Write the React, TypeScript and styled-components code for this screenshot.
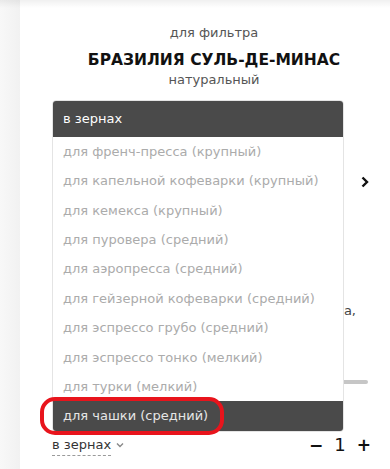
import React from "react";
import styled, { createGlobalStyle } from "styled-components";

const GlobalStyle = createGlobalStyle`
  * { box-sizing: border-box; }
  html, body { margin: 0; padding: 0; }
  body {
    font-family: "DejaVu Sans", "Noto Sans", sans-serif;
    background: #f6f6f6;
    color: #333;
  }
`;

const Page = styled.div`
  position: relative;
  display: flex;
  min-height: 469px;
  overflow: hidden;
`;

const TopShadow = styled.div`
  position: absolute;
  top: 0;
  left: 0;
  right: 0;
  height: 8px;
  background: linear-gradient(rgba(0, 0, 0, 0.06), rgba(0, 0, 0, 0));
  pointer-events: none;
  z-index: 5;
`;

const Strip = styled.div`
  width: 20px;
  flex-shrink: 0;
  background: linear-gradient(90deg, #f8f8f8, #f1f1f1);
`;

const Card = styled.div`
  flex: 1;
  min-width: 0;
  background: #fff;
  padding: 24px 14px 0 32px;
`;

const Subtitle = styled.div`
  text-align: center;
  font-size: 13px;
  line-height: 18px;
  color: #555;
`;

const Title = styled.h2`
  margin: 7px 0 0;
  text-align: center;
  font-size: 15.5px;
  line-height: 22px;
  font-weight: 700;
  color: #111;
  white-space: nowrap;
`;

const Body = styled.div`
  display: flex;
  flex-direction: column;
`;

const SliderRow = styled.div`
  height: 186px;
  display: flex;
  justify-content: flex-end;
  padding: 87px 7px 0 0;
`;

const Description = styled.p`
  margin: 26px 0 0;
  padding-right: 20px;
  font-size: 13px;
  line-height: 20px;
  color: #444;
  text-align: right;
  white-space: nowrap;
  overflow: hidden;
`;

const Track = styled.div`
  margin: 59px 8px 0 0;
  height: 4px;
  border-radius: 2px;
  background: #c6c6c6;
`;

const BottomRow = styled.div`
  margin-top: 50px;
  display: flex;
  justify-content: space-between;
  align-items: center;
  padding-right: 5px;
`;

const SelectWrap = styled.div`
  position: relative;
  display: flex;
  align-items: center;
  gap: 5px;
`;

const SelectValue = styled.span`
  font-size: 13px;
  line-height: 20px;
  color: #333;
  border-bottom: 1px dashed #9a9a9a;
`;

const Dropdown = styled.ul`
  position: absolute;
  left: 0;
  bottom: calc(100% + 3px);
  width: 292px;
  margin: 0;
  padding: 0;
  list-style: none;
  background: #fff;
  border: 1px solid #e4e4e4;
  border-radius: 4px;
  z-index: 3;
`;

const DropHead = styled.li`
  height: 36px;
  display: flex;
  align-items: center;
  padding-left: 10px;
  background: #4a4a4a;
  color: #fff;
  font-size: 13px;
  border-radius: 3px 3px 0 0;
`;

const Option = styled.li<{ $active?: boolean }>`
  position: relative;
  height: 29.4px;
  display: flex;
  align-items: center;
  padding-left: 10px;
  font-size: 13px;
  color: ${(p) => (p.$active ? "#e6e6e6" : "#ababab")};
  background: ${(p) => (p.$active ? "#4a4a4a" : "transparent")};
  border-radius: ${(p) => (p.$active ? "0 0 3px 3px" : "0")};
`;

const Highlight = styled.span`
  position: absolute;
  left: -13px;
  top: -4px;
  bottom: -4px;
  width: 184px;
  border: 4px solid #e8141c;
  border-radius: 15px;
  pointer-events: none;
`;

const Qty = styled.div`
  display: flex;
  align-items: center;
  gap: 11px;
  font-size: 18px;
  line-height: 22px;
  color: #111;
`;

const QtyButton = styled.button`
  border: 0;
  background: none;
  padding: 0;
  font: inherit;
  font-size: 17px;
  font-weight: 700;
  color: #111;
  cursor: pointer;
`;

const options = [
  "для френч-пресса (крупный)",
  "для капельной кофеварки (крупный)",
  "для кемекса (крупный)",
  "для пуровера (средний)",
  "для аэропресса (средний)",
  "для гейзерной кофеварки (средний)",
  "для эспрессо грубо (средний)",
  "для эспрессо тонко (мелкий)",
  "для турки (мелкий)",
];

export default function App() {
  return (
    <>
      <GlobalStyle />
      <Page>
        <TopShadow />
        <Strip />
        <Card>
          <Subtitle>для фильтра</Subtitle>
          <Title>БРАЗИЛИЯ СУЛЬ-ДЕ-МИНАС</Title>
          <Subtitle>натуральный</Subtitle>
          <Body>
            <SliderRow>
              <svg width="8" height="12" viewBox="0 0 8 12">
                <path d="M1.5 1.5 L6 6 L1.5 10.5" fill="none" stroke="#111" strokeWidth="2.4" />
              </svg>
            </SliderRow>
            <Description>шоколад, карамель, слива,</Description>
            <Track />
            <BottomRow>
              <SelectWrap>
                <SelectValue>в зернах</SelectValue>
                <svg width="8" height="6" viewBox="0 0 8 6">
                  <path d="M1 1.5 L4 4.5 L7 1.5" fill="none" stroke="#888" strokeWidth="1.4" />
                </svg>
                <Dropdown>
                  <DropHead>в зернах</DropHead>
                  {options.map((o) => (
                    <Option key={o}>{o}</Option>
                  ))}
                  <Option $active>
                    для чашки (средний)
                    <Highlight />
                  </Option>
                </Dropdown>
              </SelectWrap>
              <Qty>
                <QtyButton>−</QtyButton>
                <span>1</span>
                <QtyButton>+</QtyButton>
              </Qty>
            </BottomRow>
          </Body>
        </Card>
      </Page>
    </>
  );
}
